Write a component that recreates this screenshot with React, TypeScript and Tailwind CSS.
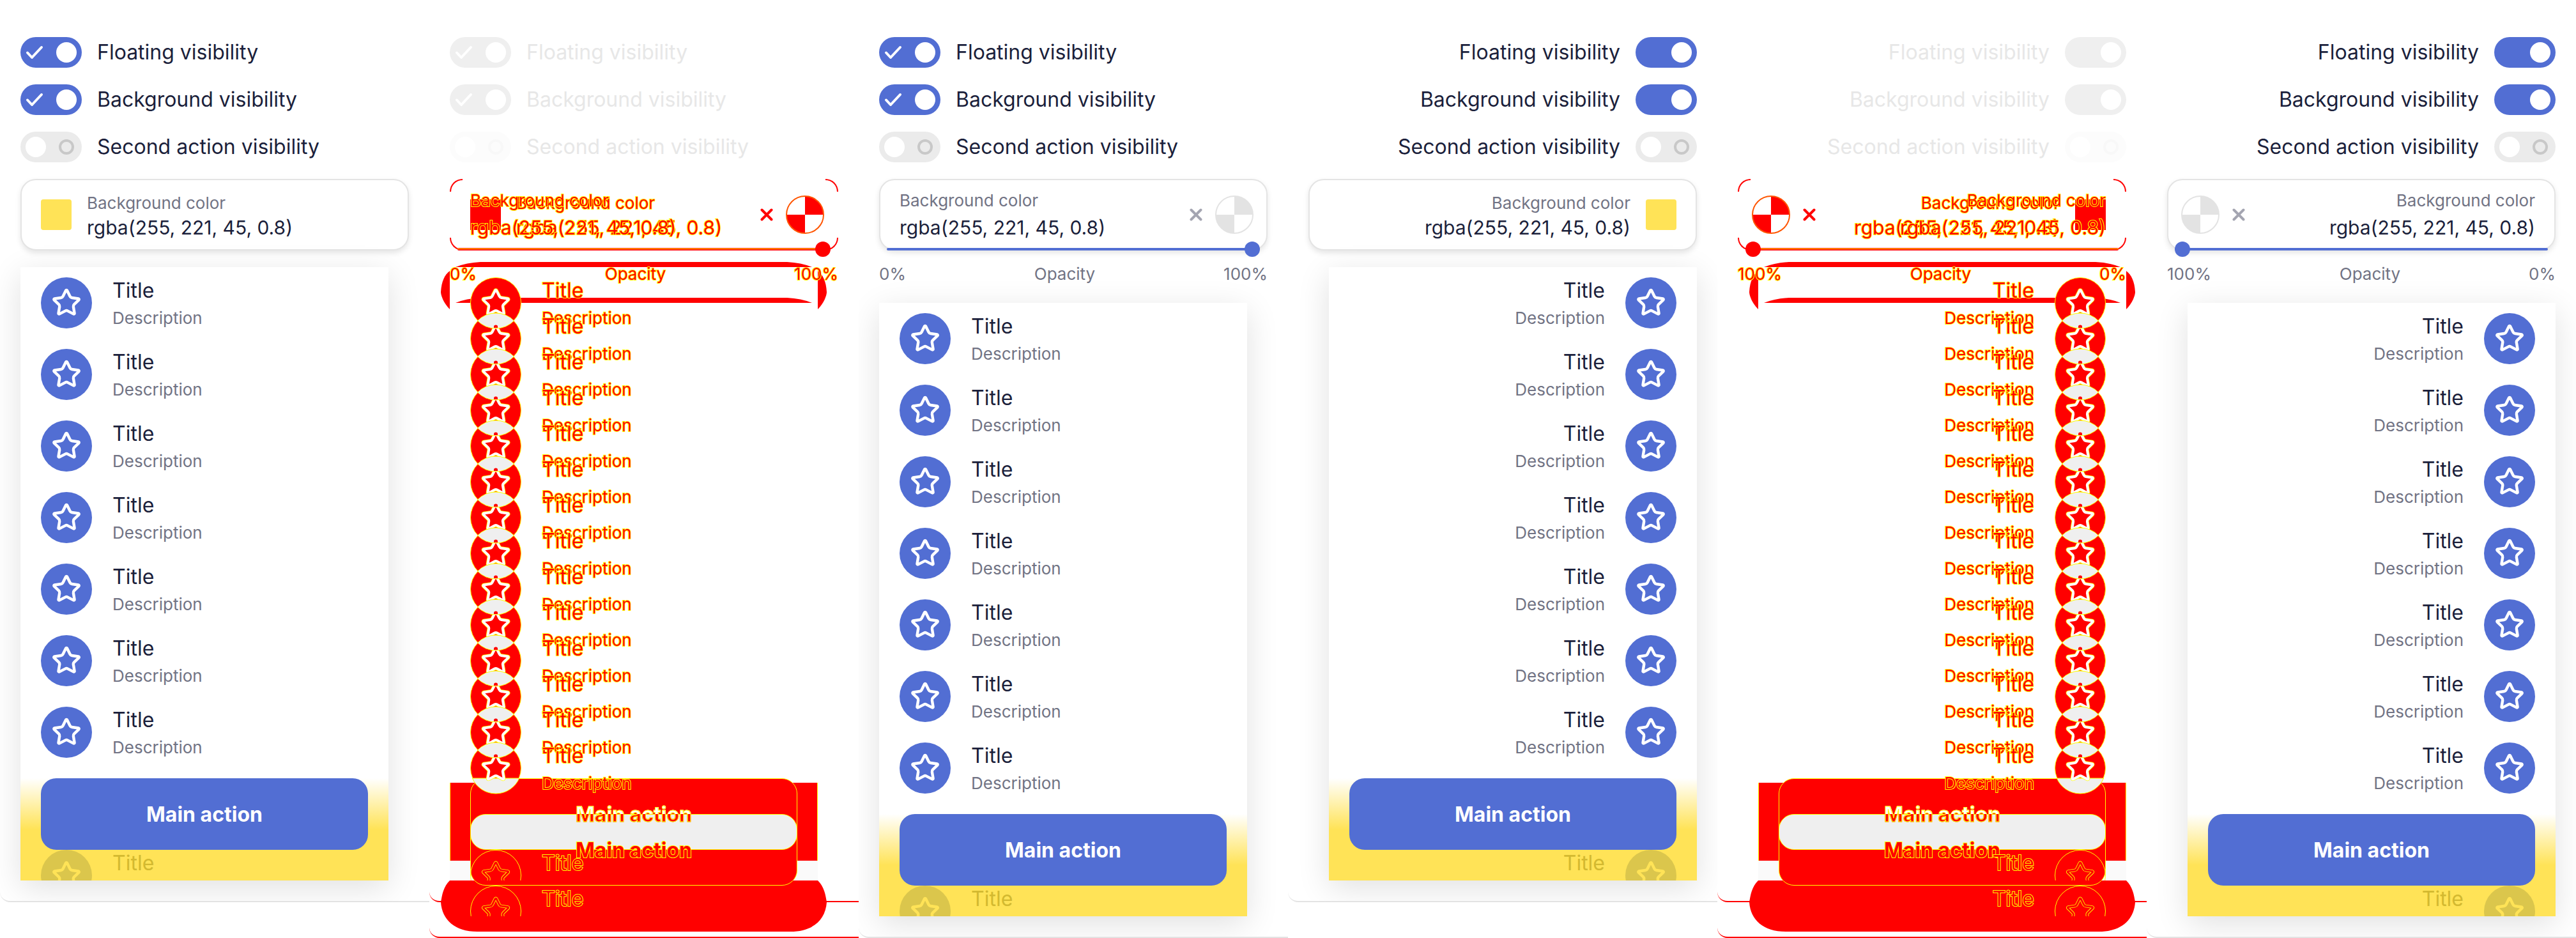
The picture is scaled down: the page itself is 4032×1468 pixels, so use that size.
import { useId } from "react";

type Dir = "ltr" | "rtl";

const STAR =
  "M11.525 2.295a.53.53 0 0 1 .95 0l2.31 4.679a2.123 2.123 0 0 0 1.595 1.16l5.166.756a.53.53 0 0 1 .294.904l-3.736 3.638a2.123 2.123 0 0 0-.611 1.878l.882 5.14a.53.53 0 0 1-.771.56l-4.618-2.428a2.122 2.122 0 0 0-1.973 0L6.396 21.01a.53.53 0 0 1-.77-.56l.881-5.139a2.122 2.122 0 0 0-.611-1.879L2.16 9.795a.53.53 0 0 1 .294-.906l5.165-.755a2.122 2.122 0 0 0 1.597-1.16z";

const VALUE = "rgba(255, 221, 45, 0.8)";

const OUTLINED =
  "text-[#ff0000] [-webkit-text-stroke:2px_#ffff00] [paint-order:stroke_fill]";

function Toggle({ text, on, dir, faint }: { text: string; on: boolean; dir: Dir; faint?: boolean }) {
  const id = useId();
  const track = faint
    ? "bg-[#fcfcfc] checked:bg-[#efefef]"
    : "bg-[#ebebeb] checked:bg-[#526ed3]";
  return (
    <div className="flex items-center gap-6">
      <span className="grid h-12 w-24 shrink-0">
        <input
          id={id}
          type="checkbox"
          role="switch"
          defaultChecked={on}
          className={`col-start-1 row-start-1 h-12 w-24 appearance-none rounded-full ${track}`}
        />
        <svg viewBox="0 0 96 48" className="pointer-events-none col-start-1 row-start-1 h-12 w-24">
          <circle cx={on ? 72 : 24} cy="24" r="16" fill="#fff" />
          {on && dir === "ltr" && (
            <path d="M11 24.500l7 7.500L33 16" fill="none" stroke="#fff" strokeWidth="4" strokeLinecap="round" strokeLinejoin="round" />
          )}
          {!on && <circle cx="72" cy="24" r="10" fill="none" stroke={faint ? "#f8f8f8" : "#c8c8c8"} strokeWidth="4" />}
        </svg>
      </span>
      <label htmlFor={id} className={`text-[32px] leading-[48px] whitespace-nowrap ${faint ? "text-[#e7e7e7]" : "text-[#1b1f3b]"}`}>
        {text}
      </label>
    </div>
  );
}

function Toggles({ dir, faint }: { dir: Dir; faint?: boolean }) {
  return (
    <div className="flex flex-col gap-[26px]">
      <Toggle text="Floating visibility" on dir={dir} faint={faint} />
      <Toggle text="Background visibility" on dir={dir} faint={faint} />
      <Toggle text="Second action visibility" on={false} dir={dir} faint={faint} />
    </div>
  );
}

function Cross({ color }: { color: string }) {
  return (
    <svg viewBox="0 0 20 20" className="size-5">
      <path d="M2.500 2.500l15 15M17.500 2.500l-15 15" stroke={color} strokeWidth="4" strokeLinecap="round" />
    </svg>
  );
}

function Checker({ color, ring }: { color: string; ring: string }) {
  return (
    <svg viewBox="0 0 60 60" className="size-[60px]">
      <circle cx="30" cy="30" r="29" fill="#fff" />
      <path d="M30 30V1a29 29 0 0 1 29 29zM30 30v29a29 29 0 0 1-29-29z" fill={color} />
      <circle cx="30" cy="30" r="29" fill="none" stroke={ring} strokeWidth="2" />
    </svg>
  );
}

function FieldText({ swatch, diff }: { swatch: boolean; diff?: boolean }) {
  return (
    <div className={`flex flex-col ${swatch ? "gap-1 pt-1" : "gap-2"}`}>
      <span className={`text-[26px] leading-8 ${diff ? OUTLINED : "text-[#717384]"}`}>Background color</span>
      <span dir="ltr" className={`text-[30px] leading-9 ${diff ? OUTLINED : "text-[#1b1f3b]"}`}>{VALUE}</span>
    </div>
  );
}

function OpacityLabels({ diff }: { diff?: boolean }) {
  return (
    <div className={`flex justify-between text-[26px] leading-8 ${diff ? OUTLINED : "text-[#717384]"}`}>
      <span dir="ltr">0%</span>
      <span>Opacity</span>
      <span dir="ltr">100%</span>
    </div>
  );
}

function StarCircle({ ghost }: { ghost?: boolean }) {
  return (
    <svg viewBox="0 0 80 80" className="size-20 shrink-0">
      <circle cx="40" cy="40" r="40" fill={ghost ? "#dbc64c" : "#526ed3"} />
      <path d={STAR} transform="translate(16.400 16) scale(1.970)" fill="none" stroke={ghost ? "#ffe357" : "#fff"} strokeWidth="2.250" strokeLinejoin="round" />
    </svg>
  );
}

function Actions() {
  return (
    <div className="overflow-hidden bg-white">
      <ul>
        {Array.from({ length: 7 }, (_, i) => (
          <li key={i} className="flex h-28 gap-8 px-8 py-4">
            <StarCircle />
            <div>
              <div className="text-[32px] leading-[42px] text-[#1b1f3b]">Title</div>
              <div className="mt-1.5 text-[26px] leading-8 text-[#717384]">Description</div>
            </div>
          </li>
        ))}
      </ul>
      <div className="mt-4 bg-[linear-gradient(to_bottom,#fff_0,#ffe357_80px)] px-8">
        <button className="h-28 w-full rounded-3xl bg-[#526ed3] pt-0.5 text-[32px] font-bold text-white">Main action</button>
        <div className="flex h-12 gap-8 overflow-hidden">
          <StarCircle ghost />
          <div className="text-[32px] leading-[42px] text-[#d3b930]">Title</div>
        </div>
      </div>
    </div>
  );
}

function Preview({ dir, slider }: { dir: Dir; slider?: boolean }) {
  return (
    <section
      dir={dir}
      className="overflow-hidden rounded-bl-2xl border-b-2 border-[#e3e3e3] bg-white px-8 pt-[58px] pb-8"
    >
      <Toggles dir={dir} />
      <div className="mt-[26px] flex h-28 items-center justify-between rounded-3xl border-2 border-[#e4e4e4] bg-white ps-[30px] pe-5 shadow-[0_4px_8px_rgba(0,0,0,0.1)]">
        <div className="flex items-center gap-6">
          {!slider && <span className="size-12 rounded-sm bg-[#ffe357]" />}
          <FieldText swatch={!slider} />
        </div>
        {slider && (
          <div className="flex items-center gap-5">
            <button aria-label="Clear"><Cross color="#a4a5b1" /></button>
            <button aria-label="Pick color"><Checker color="#e3e3e3" ring="#e3e3e3" /></button>
          </div>
        )}
      </div>
      {slider && (
        <>
          <div className="-mt-[14px] mb-[11px] flex px-3">
            <input
              type="range"
              aria-label="Opacity"
              defaultValue={100}
              className="h-6 w-full appearance-none bg-transparent [&::-webkit-slider-runnable-track]:h-1 [&::-webkit-slider-runnable-track]:rounded-full [&::-webkit-slider-runnable-track]:bg-[#526ed3] [&::-webkit-slider-thumb]:-mt-[10px] [&::-webkit-slider-thumb]:size-6 [&::-webkit-slider-thumb]:appearance-none [&::-webkit-slider-thumb]:rounded-full [&::-webkit-slider-thumb]:bg-[#526ed3]"
            />
          </div>
          <OpacityLabels />
        </>
      )}
      <div className={`me-8 shadow-[0_12px_48px_rgba(0,0,0,0.12)] ${slider ? "mt-[29px]" : "mt-[26px]"}`}>
        <Actions />
      </div>
    </section>
  );
}

function DiffCircle({ first, last }: { first: boolean; last: boolean }) {
  return (
    <svg viewBox="0 0 80 80" className="size-20 shrink-0 overflow-visible">
      <circle cx="40" cy="40" r="39.500" fill="#f00" stroke="#ff0" />
      {last && <path d="M3.340 56A40 40 0 0 0 76.660 56Z" fill="#efefef" stroke="#ff0" />}
      <path d={STAR} transform="translate(16.400 16) scale(1.970)" fill="#f00" stroke="#ff0" strokeWidth="2.800" />
      <path d={STAR} transform="translate(16.400 16) scale(1.970)" fill="#f00" stroke="#fff" strokeWidth="2" />
      {!first && (
        <>
          <path d="M11.430 12A40 40 0 0 0 68.570 12A40 40 0 0 0 11.430 12Z" fill="#efefef" stroke="#ff0" />
          <path d="M37 23v-2a3 2.500 0 0 1 6 0v2z" fill="#f00" />
        </>
      )}
    </svg>
  );
}

function GhostOutline() {
  return (
    <div className="flex h-12 gap-8 overflow-hidden">
      <svg viewBox="0 0 80 80" className="size-20 shrink-0">
        <circle cx="40" cy="40" r="39.500" fill="none" stroke="#ff0" />
        <path d={STAR} transform="translate(16.400 16) scale(1.970)" fill="none" stroke="#ff0" strokeWidth="2.400" />
        <path d={STAR} transform="translate(16.400 16) scale(1.970)" fill="none" stroke="#f00" strokeWidth="1.500" />
      </svg>
      <div className={`text-[32px] leading-[42px] ${OUTLINED}`}>Title</div>
    </div>
  );
}

function ShadowContour({ dir }: { dir: Dir }) {
  return (
    <svg
      viewBox="0 392 640 1076"
      className={`absolute top-0 h-[1076px] w-[640px] ${dir === "ltr" ? "-left-8" : "left-0"}`}
      fill="#f00"
    >
      <path d="M41 418Q58 411 80 410H560Q582 411 599 418Z" />
      <path d="M41 474Q58 467 80 466H560Q582 467 599 474Z" />
      <path d="M32 424V484C22 474 18 462 18 457C19 440 24 430 32 424Z" />
      <path d="M608 424V484C618 474 622 462 622 457C621 440 616 430 608 424Z" />
      <path d="M32 1378H608C618 1388 620 1400 622 1412C620 1440 600 1458 565 1458H75C40 1458 20 1440 18 1412C20 1400 22 1388 32 1378Z" />
    </svg>
  );
}

function Diff({ dir }: { dir: Dir }) {
  return (
    <section dir={dir} className="relative overflow-hidden bg-white px-8 pt-[58px] pb-[34px]">
      <div className="absolute inset-x-0 top-0 bottom-14 rounded-bl-2xl border-b-2 border-[#ff0000]" />
      <div className="absolute inset-x-0 top-0 bottom-0 rounded-bl-2xl border-b-2 border-[#ff0000]" />
      <Toggles dir={dir} faint />

      <div className="relative mt-[26px] grid h-28 grid-cols-1 items-center rounded-3xl">
        <div className="pointer-events-none absolute inset-0 flex flex-col justify-between">
          <div dir="ltr" className="flex justify-between">
            <span className="size-5 rounded-tl-[20px] border-t-2 border-l-2 border-[#ff0000]" />
            <span className="size-5 rounded-tr-[20px] border-t-2 border-r-2 border-[#ff0000]" />
          </div>
          <div dir="ltr" className="flex justify-between">
            <span className="size-5 rounded-bl-[20px] border-b-2 border-l-2 border-[#ff0000]" />
            <span className="size-5 rounded-br-[20px] border-r-2 border-b-2 border-[#ff0000]" />
          </div>
        </div>
        <div className="col-start-1 row-start-1 flex items-center gap-6 ps-8">
          <span className="size-12 bg-[#ff0000]" />
          <FieldText swatch diff />
        </div>
        <div className="col-start-1 row-start-1 flex items-center justify-between ps-8 pe-[22px]">
          <FieldText swatch={false} diff />
          <div className="flex items-center gap-5">
            <Cross color="#ff0000" />
            <Checker color="#ff0000" ring="#ff5500" />
          </div>
        </div>
      </div>
      <div className="relative -mt-[14px] -mb-[10px] flex px-3">
        <input
          type="range"
          aria-label="Opacity difference"
          defaultValue={100}
          className="h-6 w-full appearance-none bg-transparent [&::-webkit-slider-runnable-track]:h-1 [&::-webkit-slider-runnable-track]:rounded-full [&::-webkit-slider-runnable-track]:bg-[linear-gradient(to_bottom,#f00_1px,#ff0_1px,#ff0_2px,#f00_2px)] [&::-webkit-slider-thumb]:-mt-[10px] [&::-webkit-slider-thumb]:size-6 [&::-webkit-slider-thumb]:appearance-none [&::-webkit-slider-thumb]:rounded-full [&::-webkit-slider-thumb]:bg-[#ff0000]"
        />
      </div>

      <div className="relative grid grid-cols-1 items-start">
        <ShadowContour dir={dir} />
        <div className="relative col-start-1 row-start-1 mt-[21px]">
          <OpacityLabels diff />
        </div>

        <div className="relative col-start-1 row-start-1 me-8 mt-[826px] h-[216px]">
          <div className="absolute inset-x-0 top-[7px] h-[122px] border-x border-[#ffff00] bg-[#ff0000]" />
          <div className="absolute inset-x-0 top-[129px] h-[31px] bg-[#fafafa]" />
          <div className="absolute inset-x-8 top-0 h-[168px] rounded-3xl border border-[#ffff00] bg-[#ff0000]" />
          <div className="absolute inset-x-8 top-14 h-14 rounded-3xl border border-[#ffff00] bg-[#efefef]" />
          <button className="absolute inset-x-8 top-0 h-28 pt-0.5 text-[32px] font-bold text-transparent">
            <span className="bg-[linear-gradient(to_bottom,#fff_50%,#f00_50%)] bg-clip-text [-webkit-text-stroke:1px_#ffff00]">Main action</span>
          </button>
          <button className={`absolute inset-x-8 top-14 h-28 pt-0.5 text-[32px] font-bold ${OUTLINED}`}>Main action</button>
          <div className="absolute inset-x-8 top-28"><GhostOutline /></div>
          <div className="absolute inset-x-8 top-42"><GhostOutline /></div>
        </div>

        <ul className="relative col-start-1 row-start-1 mt-[42px] ps-8">
          {Array.from({ length: 14 }, (_, i) => (
            <li key={i} className="flex h-14 gap-8">
              <DiffCircle first={i === 0} last={i === 13} />
              <div className={OUTLINED}>
                <div className="text-[32px] leading-[42px]">Title</div>
                <div className="mt-1.5 text-[26px] leading-8">Description</div>
              </div>
            </li>
          ))}
        </ul>
      </div>
    </section>
  );
}

export default function App() {
  return (
    <main className="grid grid-cols-6 items-start bg-white font-['Inter',sans-serif]">
      <Preview dir="ltr" />
      <Diff dir="ltr" />
      <Preview dir="ltr" slider />
      <Preview dir="rtl" />
      <Diff dir="rtl" />
      <Preview dir="rtl" slider />
    </main>
  );
}
